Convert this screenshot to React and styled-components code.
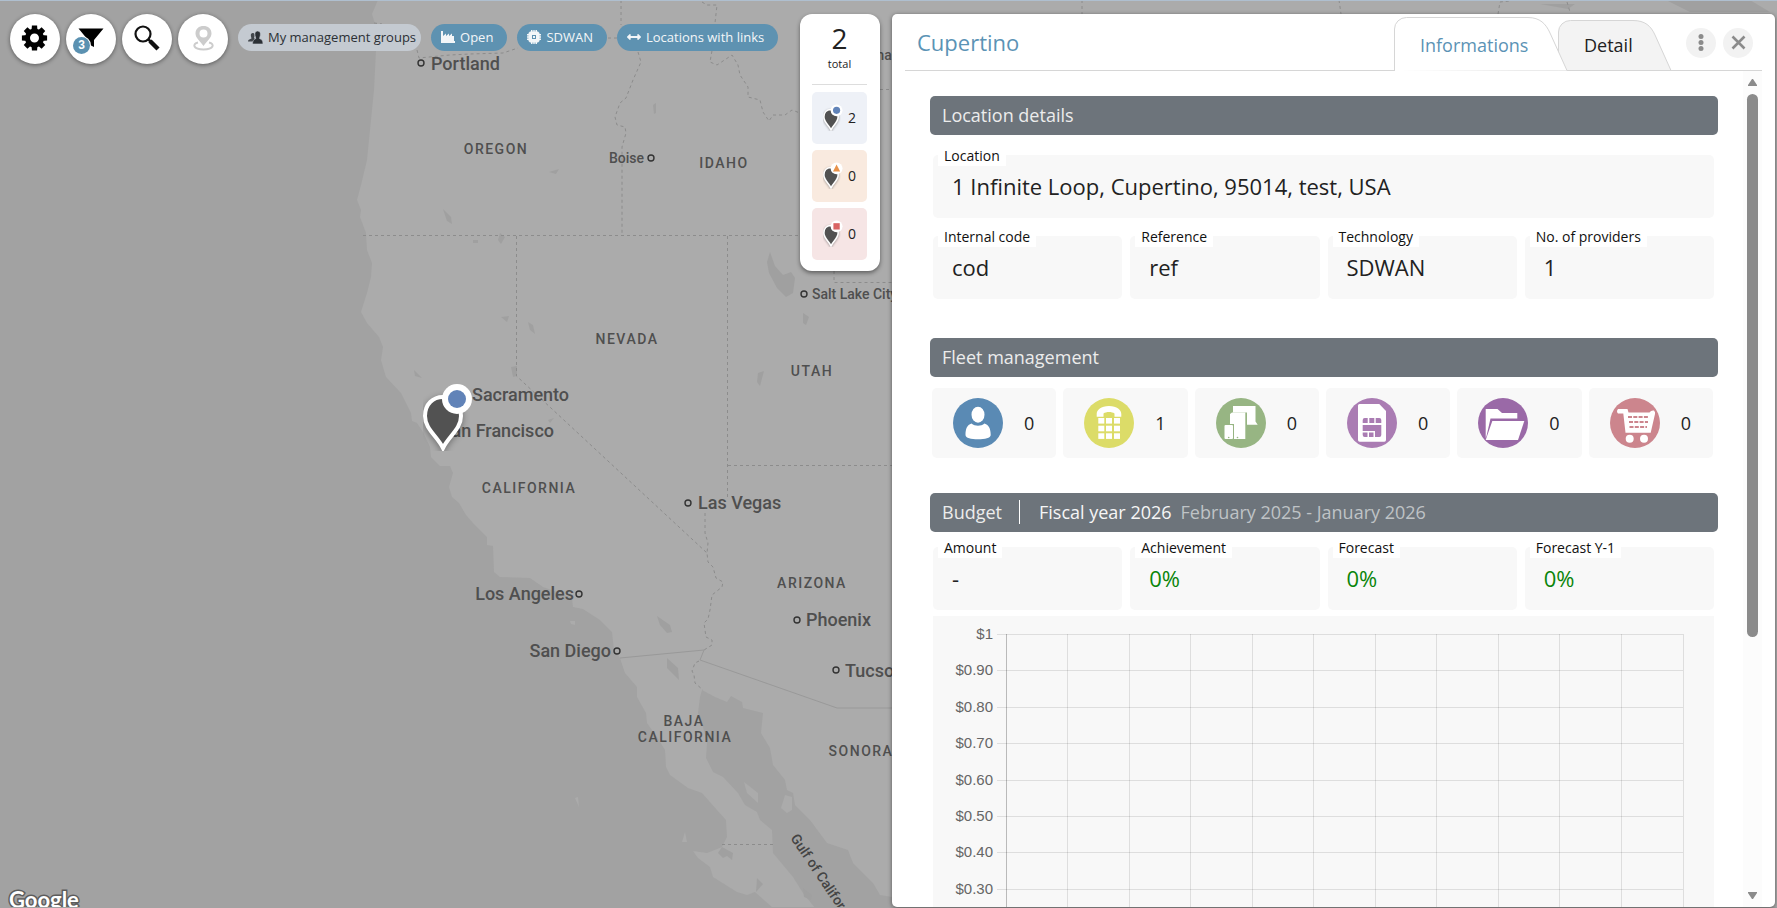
import React, { useState } from 'react';
import styled, { createGlobalStyle } from 'styled-components';
import { FaArrowsAltH } from 'react-icons/fa';

const GlobalStyle = createGlobalStyle`
  * {
    box-sizing: border-box;
  }
  body {
    margin: 0;
    background: #a2a2a2;
    font-family: "Open Sans", "Noto Sans", sans-serif;
    color: #222;
  }
  button {
    font-family: inherit;
    border: none;
    padding: 0;
    cursor: pointer;
  }
`;

const Page = styled.div`
  position: relative;
  height: 100vh;
  overflow: hidden;
  border-top: 1px solid #afbfcf;
`;

const MapCanvas = styled.svg`
  position: absolute;
  top: -1px;
  left: 0;
  font-family: Roboto, sans-serif;
  font-weight: 500;
  fill: #4f4f4f;
`;

const Overlay = styled.div`
  position: relative;
  display: flex;
  align-items: flex-start;
  gap: 12px;
  height: 100%;
  padding: 13px 2px 1px 10px;
`;

/* ---------- toolbar ---------- */

const Toolbar = styled.div`
  flex: 1;
  min-width: 0;
  display: flex;
  gap: 10px;
`;

const RoundButtons = styled.div`
  display: flex;
  gap: 6px;
`;

const RoundButton = styled.button`
  position: relative;
  width: 50px;
  height: 50px;
  border-radius: 50%;
  background: #fff;
  box-shadow: 0 1px 4px rgba(0, 0, 0, 0.45);

  svg {
    display: block;
  }
`;

const FilterCount = styled.span`
  position: absolute;
  left: 7px;
  top: 23px;
  width: 17px;
  height: 17px;
  border-radius: 50%;
  background: #5b91b1;
  box-shadow: 0 0 0 1px #fff;
  color: #fff;
  font: bold 12px/17px "Liberation Sans", sans-serif;
  text-align: center;
`;

const Chips = styled.div`
  display: flex;
  align-items: flex-start;
  gap: 10px;
  padding-top: 10px;
`;

const Chip = styled.button`
  display: flex;
  align-items: center;
  gap: 5px;
  height: 27px;
  padding: ${({ $light }) => ($light ? '0 5px 1px 10px' : '0 14px 1px 10px')};
  border-radius: 14px;
  background: ${({ $light }) => ($light ? '#c4cad1' : '#5e92b1')};
  color: ${({ $light }) => ($light ? '#2b3035' : '#f3f6f8')};
  font-size: 13px;
  white-space: nowrap;
`;

/* ---------- counters ---------- */

const Counters = styled.aside`
  width: 80px;
  padding: 6px 13px 11px 12px;
  border-radius: 12px;
  background: #fff;
  box-shadow: 0 2px 4px rgba(0, 0, 0, 0.45);
`;

const Total = styled.div`
  display: flex;
  flex-direction: column;
  align-items: center;
  height: 65px;
  margin-bottom: 7px;
  border-bottom: 1px solid #ddd;
`;

const TotalValue = styled.strong`
  font-size: 28px;
  font-weight: 400;
  line-height: 37px;
`;

const TotalLabel = styled.span`
  font-size: 11px;
  line-height: 14px;
`;

const CounterList = styled.div`
  display: flex;
  flex-direction: column;
  gap: 6px;
`;

const Counter = styled.button`
  display: flex;
  align-items: center;
  justify-content: center;
  gap: 5px;
  height: 52px;
  padding-bottom: 1px;
  border-radius: 5px;
  background: ${({ $tone }) => $tone};
  color: #222;
  font-size: 14px;
`;

/* ---------- panel ---------- */

const Panel = styled.section`
  flex: none;
  align-self: stretch;
  width: calc((100vw - 11px) / 2);
  display: flex;
  flex-direction: column;
  padding: 0 13px;
  border-radius: 5px;
  background: #fff;
  box-shadow: 0 1px 4px rgba(0, 0, 0, 0.5);
`;

const PanelHeader = styled.header`
  flex: none;
  display: flex;
  align-items: flex-end;
  height: 57px;
  padding: 0 9px 0 12px;
  border-bottom: 1px solid #d6d6d6;
`;

const Title = styled.h1`
  flex: 1;
  margin: 0 0 13px;
  font-size: 22px;
  font-weight: 400;
  line-height: 30px;
  color: #5b93b5;
`;

const Tabs = styled.div`
  display: flex;
  align-items: flex-end;
  margin: 0 14px -1px 0;
`;

const Tab = styled.button`
  position: relative;
  z-index: ${({ $first }) => ($first ? 2 : 1)};
  width: ${({ $first }) => ($first ? '173px' : '114px')};
  height: ${({ $first }) => ($first ? '54px' : '51px')};
  margin-left: ${({ $first }) => ($first ? '0' : '-9px')};
  padding: 0 0 14px 26px;
  display: flex;
  align-items: flex-end;
  background: none;
  color: ${({ $active }) => ($active ? '#5b93b5' : '#222')};
  font-size: 18px;
  line-height: 24px;

  svg {
    position: absolute;
    inset: 0;
    z-index: -1;
    overflow: visible;
  }
`;

const HeaderActions = styled.div`
  display: flex;
  gap: 7px;
  margin-bottom: 12px;
`;

const ActionButton = styled.button`
  width: 30px;
  height: 30px;
  border-radius: 50%;
  background: #f2f2f2;

  svg {
    display: block;
  }
`;

const PanelBody = styled.div`
  flex: 1;
  min-height: 0;
  display: flex;
`;

const Scroller = styled.div`
  flex: 1;
  min-width: 0;
  overflow: hidden;
  padding: 25px 25px 0;
`;

const ScrollTrack = styled.div`
  width: 19px;
  display: flex;
  flex-direction: column;
  align-items: center;
  padding: 8px 0;
  background: #fcfcfc;
`;

const ScrollRail = styled.div`
  flex: 1;
  width: 11px;
  margin: 8px 0;
  display: grid;
  grid-template-rows: 11fr 5fr;
`;

const ScrollThumb = styled.div`
  border-radius: 6px;
  background: #8b8b8b;
`;

const SectionHeader = styled.h2`
  display: flex;
  align-items: center;
  height: 39px;
  margin: 0;
  padding: 0 12px 2px;
  border-radius: 5px;
  background: #6d747b;
  color: #ececec;
  font-size: 18px;
  font-weight: 400;
`;

const FiscalYear = styled.span`
  display: flex;
  align-items: center;
  height: 24px;
  margin: 0 9px 0 17px;
  padding-left: 19px;
  border-left: 1px solid #fff;
  color: #f6f6f6;
`;

const FiscalRange = styled.span`
  color: #bfc3c6;
`;

const Fields = styled.dl`
  display: grid;
  grid-template-columns: repeat(4, 1fr);
  gap: 18px 8px;
  margin: ${({ $tight }) => ($tight ? '15px 4px 6px 3px' : '20px 4px 39px 3px')};
`;

const Field = styled.div`
  grid-column: ${({ $wide }) => ($wide ? '1 / -1' : 'auto')};
  display: flex;
  flex-direction: column;
  align-items: flex-start;
  padding: 0 5px 17px;
  border-radius: 5px;
  background: #f8f8f8;
`;

const FieldLabel = styled.dt`
  margin-top: -9px;
  padding: 0 6px;
  background: #fff;
  color: #111;
  font-size: 14px;
  line-height: 20px;
`;

const FieldValue = styled.dd`
  margin: 5px 0 0;
  padding-left: 14px;
  color: ${({ $good }) => ($good ? '#0a850a' : '#222')};
  font-size: 22px;
  line-height: 30px;
`;

const Fleet = styled.div`
  display: grid;
  grid-template-columns: repeat(6, 1fr);
  gap: 7px;
  margin: 11px 5px 35px 2px;
`;

const FleetCard = styled.a`
  display: flex;
  align-items: center;
  gap: 21px;
  height: 70px;
  padding: 0 0 1px 21px;
  border-radius: 5px;
  background: #f8f8f8;
  color: #222;
  font-size: 18px;
  text-decoration: none;
`;

const ChartBox = styled.div`
  display: flex;
  margin: 0 4px 0 3px;
  padding: 18px 31px 18px 0;
  background: #f8f8f8;
`;

const YAxis = styled.svg`
  flex: none;
  overflow: visible;
  font: 15px "Liberation Sans", Arial, sans-serif;
  fill: #666;
`;

const Plot = styled.svg`
  flex: 1;
  min-width: 0;
  overflow: visible;
`;

/* ---------- drawings ---------- */

const badgeMarks = {
  ok: <circle cx="34" cy="16" r="9" fill="#6183b8" />,
  warning: <path d="M34 6l9 18H25z" fill="#e8924a" />,
  critical: <path d="M26 8h16v16H26z" fill="#d96464" />,
};

const Pin = ({ status, ...props }) => (
  <svg viewBox="0 0 50 68" width="20" height="27" {...props}>
    <path
      d="M20 65C14 53 2 46 2 33C2 21 10 14 20 14C30 14 38 21 38 33C38 46 26 53 20 65Z"
      fill="#525252"
      stroke="#fff"
      strokeWidth="4"
      style={{ filter: 'drop-shadow(0 2px 3px rgba(0,0,0,.35))' }}
    />
    <circle cx="34" cy="16" r="15" fill="#fff" />
    {badgeMarks[status]}
  </svg>
);

const GearIcon = () => (
  <svg width="50" height="50" viewBox="0 0 50 50">
    <g transform="translate(24.500 24)">
      {[0, 45, 90, 135, 180, 225, 270, 315].map((a) => (
        <path key={a} d="M-3 -7L-2.600 -12.600H2.600L3 -7Z" transform={`rotate(${a})`} />
      ))}
      <circle r="7" fill="none" stroke="#000" strokeWidth="5" />
    </g>
  </svg>
);

const FunnelIcon = () => (
  <svg width="50" height="50" viewBox="0 0 50 50">
    <path d="M12.500 14.500H37.500L28 26V33L22 30V26Z" />
  </svg>
);

const SearchIcon = () => (
  <svg width="50" height="50" viewBox="0 0 50 50" fill="none" stroke="#111">
    <circle cx="21" cy="20" r="7.500" strokeWidth="2.200" />
    <path d="M26 25L29 28" strokeWidth="2.500" />
    <path d="M28 27L36 35" strokeWidth="4.500" />
  </svg>
);

const PlaceIcon = () => (
  <svg width="50" height="50" viewBox="0 0 50 50">
    <path
      fill="#ccc"
      fillRule="evenodd"
      d="M25.500 32C22 27 17.500 24 17.500 19.500C17.500 14.500 21 12 25.500 12S33.500 14.500 33.500 19.500C33.500 24 29 27 25.500 32ZM25.500 15.500A4 4 0 1 0 25.500 23.500A4 4 0 1 0 25.500 15.500Z"
    />
    <path
      fill="none"
      stroke="#ccc"
      strokeWidth="2"
      d="M20 28.500C14 30 15 35.500 25.500 35.500S37 30 31 28.500"
    />
  </svg>
);

const GroupIcon = () => (
  <svg width="15" height="13" viewBox="0 0 15 13" fill="#2b3035">
    <path opacity=".85" d="M4.500 2C6 1.500 7 3 6.500 5.500L6 7L7 8V10.500H0C0 9 1 8.500 3.500 7.500L3 5.500C2.500 3.500 3 2.300 4.500 2Z" />
    <path d="M9.500 0C12 0 12.800 2 12.300 4.500L11.500 7.500C14 8.700 15 9.500 15 13H4.500C4.500 10 5.500 8.900 7.800 7.500L7 4.500C6.500 2 7.500 0 9.500 0Z" stroke="#c4cad1" strokeWidth=".6" />
  </svg>
);

const FactoryIcon = () => (
  <svg width="14" height="12" viewBox="0 0 14 12" fill="#f3f6f8">
    <path d="M0 0H2V5L5 2.500V5L8 2.500V5L11 2.500V5H13V10H14V12H0Z" />
  </svg>
);

const ChipIcon = () => (
  <svg width="14" height="14" viewBox="0 0 14 14" fill="#f3f6f8">
    <path
      fillRule="evenodd"
      d="M3 1.500H4V0H5.500V1.500H6.300V0H7.700V1.500H8.500V0H10V1.500H11L12.500 3V4H14V5.500H12.500V6.300H14V7.700H12.500V8.500H14V10H12.500V11L11 12.500H10V14H8.500V12.500H7.700V14H6.300V12.500H5.500V14H4V12.500H3L1.500 11V10H0V8.500H1.500V7.700H0V6.300H1.500V5.500H0V4H1.500V3ZM5 5V9H9V5Z"
    />
    <path d="M6 6H8V8H6Z" />
  </svg>
);

const fleetIcons = {
  people: (
    <>
      <ellipse cx="25" cy="16.700" rx="6.500" ry="8" />
      <path d="M18.500 25.500C22 28.500 28 28.500 31.500 25.500C36 27 37.700 31 37.700 37C37.700 40 32 41.300 25 41.300S12.500 40 12.500 37C12.500 31 14 27 18.500 25.500Z" />
    </>
  ),
  phones: (
    <>
      <path d="M25 8C33 8 37.300 12 37.300 16V18.700H30.500V15.500C28 13.500 22 13.500 19.500 15.500V18.700H12.700V16C12.700 12 17 8 25 8Z" />
      {[20, 27.700, 35.300].map((y) =>
        [14.300, 22, 30].map((x) => <rect key={`${x}-${y}`} x={x} y={y} width="6" height="5.600" />)
      )}
    </>
  ),
  devices: (
    <>
      <path d="M17 8H39.500V23.500L41.700 26.700H31V14.500H17Z" />
      <path d="M16 14.500H29.300V41H18V26H14V16Z" />
      <rect x="8.500" y="27" width="8.500" height="14" rx="1" />
      <circle cx="12.700" cy="39.500" r=".8" fill="#97b583" />
      <circle cx="21.500" cy="39.500" r=".8" fill="#97b583" />
    </>
  ),
  sim: (
    <>
      <path d="M12.500 6H32.300L39 13V42Q39 43.700 37.300 43.700H12.700Q11 43.700 11 42V7.500Q11 6 12.500 6Z" />
      <g fill="#aa7cb3">
        <path d="M15.700 22Q15.700 20 17.700 20H20.700V25H15.700ZM22.300 20H27.300V25H22.300ZM28.700 20H32.300Q34.300 20 34.300 22V25H28.700Z" />
        <path d="M15.700 27H34.300V37Q34.300 39 32.300 39H28V33H15.700ZM15.700 34.500H20.500V39H17.700Q15.700 39 15.700 37ZM22 34.500H26.500V39H22Z" />
      </g>
    </>
  ),
  folder: (
    <>
      <path d="M7.700 11H19.500L24 15H39.300V20.500H12.500L8.500 38L7.700 40Z" />
      <path d="M14.300 23H46.300L40 42H7.700Z" />
    </>
  ),
  cart: (
    <>
      <path d="M8 11H17.500L18.500 14.500H39.500Q41 12 44 12.500Q45.500 14 45 16L40.700 34.700H15.500L13.300 15.500H8Q6 13.300 8 11Z" />
      <path d="M18 19H39M19 24H38M19.500 29H37" fill="none" stroke="#cc858d" strokeWidth="1.800" strokeDasharray="4 1.300" />
      <circle cx="19.700" cy="40.700" r="4" />
      <circle cx="34" cy="40.700" r="4" />
    </>
  ),
};

const FleetIcon = ({ name, color }) => (
  <svg width="50" height="50" viewBox="0 0 50 50" fill="#fff" aria-hidden="true">
    <circle cx="25" cy="25" r="25" fill={color} />
    {fleetIcons[name]}
  </svg>
);

/* ---------- data ---------- */

const counters = [
  { status: 'ok', tone: '#eef1f7', value: 2 },
  { status: 'warning', tone: '#f9eadf', value: 0 },
  { status: 'critical', tone: '#f6e5e5', value: 0 },
];

const locationFields = [
  { label: 'Location', value: '1 Infinite Loop, Cupertino, 95014, test, USA', wide: true },
  { label: 'Internal code', value: 'cod' },
  { label: 'Reference', value: 'ref' },
  { label: 'Technology', value: 'SDWAN' },
  { label: 'No. of providers', value: '1' },
];

const budgetFields = [
  { label: 'Amount', value: '-' },
  { label: 'Achievement', value: '0%', good: true },
  { label: 'Forecast', value: '0%', good: true },
  { label: 'Forecast Y-1', value: '0%', good: true },
];

const fleet = [
  { name: 'people', color: '#5a8ab4', value: 0 },
  { name: 'phones', color: '#dcdc68', value: 1 },
  { name: 'devices', color: '#97b583', value: 0 },
  { name: 'sim', color: '#aa7cb3', value: 0 },
  { name: 'folder', color: '#9a69a7', value: 0 },
  { name: 'cart', color: '#cc858d', value: 0 },
];

const ticks = ['$1', '$0.90', '$0.80', '$0.70', '$0.60', '$0.50', '$0.40', '$0.30', '$0.20', '$0.10', '$0'];
const CHART_HEIGHT = 364;
const tickY = (i) => Math.round((i * CHART_HEIGHT) / 10);

const regions = [
  ['OREGON', 496, 154],
  ['IDAHO', 724, 168],
  ['NEVADA', 627, 344],
  ['UTAH', 812, 376],
  ['CALIFORNIA', 529, 493],
  ['ARIZONA', 812, 588],
  ['SONORA', 861, 756],
  ['BAJA', 684, 726],
  ['CALIFORNIA', 685, 742],
];

// name, x, baseline, size, anchor, dot x, dot y
const cities = [
  ['Portland', 431, 70, 18, 'start', 421, 63],
  ['Boise', 644, 163, 14, 'end', 651, 158],
  ['Bozeman', 841, 60, 14, 'start'],
  ['Salt Lake City', 812, 299, 14, 'start', 804, 294],
  ['Sacramento', 472, 401, 18, 'start'],
  ['San Francisco', 554, 437, 18, 'end'],
  ['Las Vegas', 698, 509, 18, 'start', 688, 503],
  ['Los Angeles', 574, 600, 18, 'end', 579, 594],
  ['San Diego', 611, 657, 18, 'end', 617, 651],
  ['Phoenix', 806, 626, 18, 'start', 797, 620],
  ['Tucson', 845, 677, 18, 'start', 836, 670],
];

const land =
  'M378 0L372 14L375 24L376 50L374 90L370 130L367 160L361 185L357 200L361 210L360 217L366 233L367 250L372 263L371 277L367 293L361 312L367 323L379 337L383 347L381 360L386 377L401 393L411 413L412 421L417 423L423 432L430 447L431 457L440 466L450 466L453 473L449 487L452 497L459 503L466 515L473 523L480 530L487 537L487 545L493 546L494 572L500 577L530 578L543 587L557 592L572 598L573 607L583 609L600 620L612 632L614 650L620 658L625 673L637 687L637 697L646 713L647 723L657 737L665 750L666 767L670 775L688 788L702 793L717 810L726 820L727 837L722 847L707 853L693 851L698 858L710 867L713 877L737 892L747 895L755 892L773 908H815L803 893L793 877L773 853L772 830L760 820L757 812L745 805L738 793L723 777L713 772L706 758L707 743L703 727L698 713L700 697L702 690L715 697L727 702L731 696L742 702L743 708L763 713L761 733L770 748L773 765L785 780L787 790L793 793L795 805L810 820L827 843L848 850L853 863L873 883L880 895L892 897V908H3000V0Z';

const lakes =
  'M770 252L767 262L769 273L777 288L786 297L793 293L795 278L791 272L783 275L775 266ZM657 616L670 625L672 632L667 633L660 625ZM667 658L678 668L679 680L672 673L667 668ZM443 209L451 217L452 224L447 221ZM500 233L505 237L501 244L498 240ZM473 240H478V243H473ZM653 105L656 103V113L654 114ZM528 322L533 325L535 334L530 330ZM501 317L509 316L507 322ZM803 313L809 317L806 325L803 323ZM764 371L758 373L757 382L760 386ZM414 370L422 378L415 376ZM511 367L517 366V376L513 377ZM548 420L554 418L550 423ZM1666 0H1750L1770 12H1690ZM1540 4H1575L1568 9ZM722 847L733 853L732 860L727 856L723 858L718 853ZM757 878L763 884L756 892ZM803 888L812 895L811 900L804 897ZM549 172L559 169L556 174Z';

const islands =
  'M744 782L758 793V803L747 793ZM785 795L792 797V810L787 813L781 808ZM570 621L575 621V625L571 624ZM575 798L578 797L579 807ZM685 832L687 842L682 842Z';

const stateLines =
  'M374 23L382 24M417 50L419 58L450 55L470 54L503 53L518 48M608 38H618M621 0V25M638 52L641 62L633 80L626 98L620 103L615 117L617 125L625 127L626 133L622 147V235M363 235.500H800M516.500 236V376L707 553M727.500 236V500M728 465.500H892M834 271V282.500H892M705 513V533L708 543L707 553L708 562L713 567L716 578L723 582L722 587L712 595L710 610L708 619L704 623L706 637L712 640V645L704 650M699 661L695 663L692 671L694 675L695 683L703 690M722 844.500H773M702 2L707 5L717 5L715 23M713 45L710 62L717 65L732 55L738 65L740 75L748 87V97L760 100L763 112L769 121L773 115H785L792 110L800 113M880 89.500H892M1082 0V14M1339 0L1341 14M1498 14L1500 2L1510 1M1567 2L1570 12';

const MapView = () => (
  <MapCanvas width="100%" height="100%" aria-label="Map">
    <path d={land} fill="#ababab" />
    <path d={lakes} fill="#a0a0a0" />
    <path d={islands} fill="#ababab" />
    <path d={stateLines} fill="none" stroke="#8c8c8c" strokeDasharray="3 3" />
    <path d="M620 658L704 650L700 660L837 708H892" fill="none" stroke="#999" />
    <g fontSize="14" letterSpacing="1.500" textAnchor="middle">
      {regions.map(([name, x, y]) => (
        <text key={name + y} x={x} y={y}>{name}</text>
      ))}
    </g>
    {cities.map(([name, x, y, size, anchor, cx, cy]) => (
      <g key={name}>
        <text x={x} y={y} fontSize={size} textAnchor={anchor}>{name}</text>
        {cx && <circle cx={cx} cy={cy} r="3" fill="none" stroke="#333" strokeWidth="1.400" />}
      </g>
    ))}
    <text transform="translate(790 838) rotate(56)" fontSize="14" fill="#444">Gulf of California</text>
    <text
      x="9"
      y="908"
      fontFamily="Lato, sans-serif"
      fontWeight="700"
      fontSize="22"
      fill="#fff"
      stroke="#5c5c5c"
      strokeWidth="3"
      paintOrder="stroke"
    >
      Google
    </text>
    <Pin status="ok" x="423" y="383" width="50" height="68" />
  </MapCanvas>
);

const FieldGrid = ({ fields, tight }) => (
  <Fields $tight={tight}>
    {fields.map(({ label, value, wide, good }) => (
      <Field key={label} $wide={wide}>
        <FieldLabel>{label}</FieldLabel>
        <FieldValue $good={good}>{value}</FieldValue>
      </Field>
    ))}
  </Fields>
);

const BudgetChart = () => (
  <ChartBox>
    <YAxis width="73" height={CHART_HEIGHT}>
      {ticks.map((tick, i) => (
        <g key={tick}>
          <text x="60" y={tickY(i) + 5} textAnchor="end">{tick}</text>
          <path d={`M64 ${tickY(i) + 0.5}H73`} stroke="#dedede" />
        </g>
      ))}
    </YAxis>
    <Plot height={CHART_HEIGHT} shapeRendering="crispEdges">
      {ticks.map((tick, i) => (
        <line key={tick} x1="0" x2="100%" y1={tickY(i) + 0.5} y2={tickY(i) + 0.5} stroke="rgba(0,0,0,.1)" />
      ))}
      {Array.from({ length: 12 }, (_, i) => (
        <line
          key={i}
          x1={`${(i * 100) / 11}%`}
          x2={`${(i * 100) / 11}%`}
          y1="0"
          y2="100%"
          stroke={i ? 'rgba(0,0,0,.1)' : 'rgba(0,0,0,.25)'}
        />
      ))}
    </Plot>
  </ChartBox>
);

const App = () => {
  const [activeTab, setActiveTab] = useState('Informations');

  return (
    <Page>
      <GlobalStyle />
      <MapView />
      <Overlay>
        <Toolbar>
          <RoundButtons>
            <RoundButton aria-label="Settings"><GearIcon /></RoundButton>
            <RoundButton aria-label="Filters">
              <FunnelIcon />
              <FilterCount>3</FilterCount>
            </RoundButton>
            <RoundButton aria-label="Search"><SearchIcon /></RoundButton>
            <RoundButton aria-label="Locate"><PlaceIcon /></RoundButton>
          </RoundButtons>
          <Chips>
            <Chip $light><GroupIcon />My management groups</Chip>
            <Chip><FactoryIcon />Open</Chip>
            <Chip><ChipIcon />SDWAN</Chip>
            <Chip><FaArrowsAltH size={14} />Locations with links</Chip>
          </Chips>
        </Toolbar>

        <Counters>
          <Total>
            <TotalValue>2</TotalValue>
            <TotalLabel>total</TotalLabel>
          </Total>
          <CounterList>
            {counters.map(({ status, tone, value }) => (
              <Counter key={status} $tone={tone} aria-label={`${status} ${value}`}>
                <Pin status={status} />
                {value}
              </Counter>
            ))}
          </CounterList>
        </Counters>

        <Panel>
          <PanelHeader>
            <Title>Cupertino</Title>
            <Tabs role="tablist">
              <Tab
                role="tab"
                aria-selected={activeTab === 'Informations'}
                $first
                $active={activeTab === 'Informations'}
                onClick={() => setActiveTab('Informations')}
              >
                <svg width="173" height="54">
                  <path
                    d="M.500 54V12A12 11.500 0 0 1 12.500 .500H134C146 .500 152 7 156 16L173 53.500"
                    fill="#fff"
                    stroke="#d6d6d6"
                  />
                </svg>
                Informations
              </Tab>
              <Tab
                role="tab"
                aria-selected={activeTab === 'Detail'}
                $active={activeTab === 'Detail'}
                onClick={() => setActiveTab('Detail')}
              >
                <svg width="114" height="51">
                  <path
                    d="M.500 50.500V12A12 11.500 0 0 1 12.500 .500H75C87 .500 93 6 97 15L113 50.500Z"
                    fill="#f3f3f3"
                    stroke="#d6d6d6"
                  />
                </svg>
                Detail
              </Tab>
            </Tabs>
            <HeaderActions>
              <ActionButton aria-label="More">
                <svg width="30" height="30" fill="#8b8b8b">
                  <circle cx="15" cy="8.500" r="2.500" />
                  <circle cx="15" cy="14.500" r="2.500" />
                  <circle cx="15" cy="20.500" r="2.500" />
                </svg>
              </ActionButton>
              <ActionButton aria-label="Close">
                <svg width="30" height="30" stroke="#8b8b8b" strokeWidth="2.600">
                  <path d="M9.500 8.500L21.500 20.500M21.500 8.500L9.500 20.500" />
                </svg>
              </ActionButton>
            </HeaderActions>
          </PanelHeader>

          <PanelBody>
            <Scroller>
              <SectionHeader>Location details</SectionHeader>
              <FieldGrid fields={locationFields} />

              <SectionHeader>Fleet management</SectionHeader>
              <Fleet>
                {fleet.map(({ name, color, value }) => (
                  <FleetCard key={name} href={`#${name}`}>
                    <FleetIcon name={name} color={color} />
                    {value}
                  </FleetCard>
                ))}
              </Fleet>

              <SectionHeader>
                Budget
                <FiscalYear>Fiscal year 2026</FiscalYear>
                <FiscalRange>February 2025 - January 2026</FiscalRange>
              </SectionHeader>
              <FieldGrid fields={budgetFields} tight />
              <BudgetChart />
            </Scroller>
            <ScrollTrack>
              <svg width="9" height="7"><path d="M0 7V6L4 0H5L9 6V7Z" fill="#8b8b8b" /></svg>
              <ScrollRail>
                <ScrollThumb />
              </ScrollRail>
              <svg width="9" height="7"><path d="M0 0V1L4 7H5L9 1V0Z" fill="#8b8b8b" /></svg>
            </ScrollTrack>
          </PanelBody>
        </Panel>
      </Overlay>
    </Page>
  );
};

export default App;
